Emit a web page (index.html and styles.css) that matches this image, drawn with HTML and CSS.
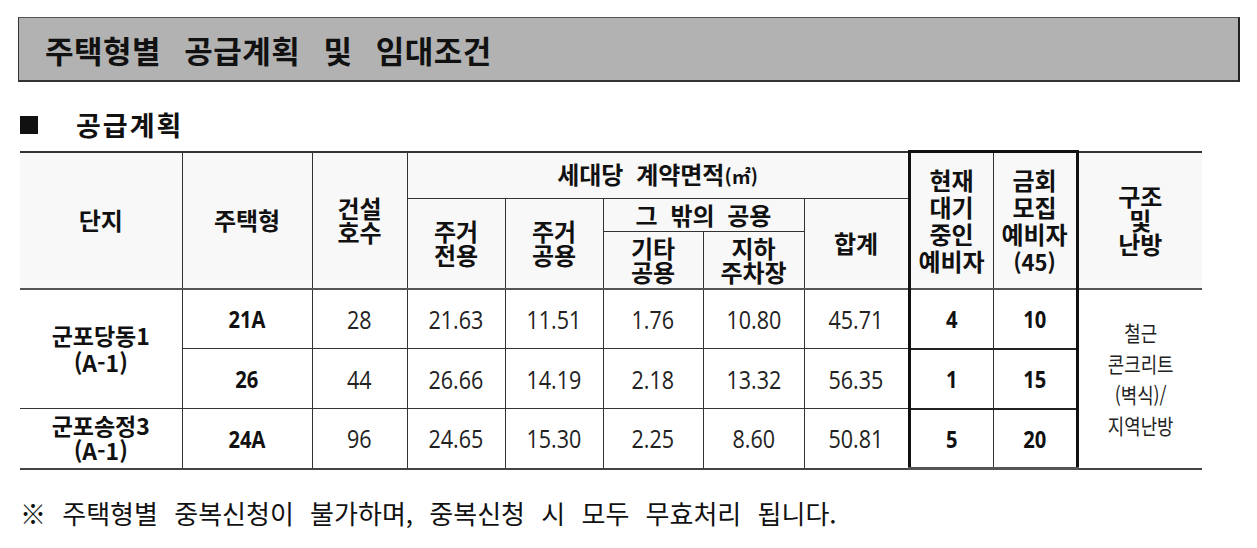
FILE: index.html
```html
<!DOCTYPE html>
<html lang="ko">
<head>
<meta charset="utf-8">
<title>주택형별 공급계획 및 임대조건</title>
<link rel="stylesheet" href="styles.css">
</head>
<body>
<div class="page">
  <div class="title-bar"><h1 class="title">주택형별 공급계획 및 임대조건</h1></div>

  <div class="section-head">
    <span class="square"></span>
    <h2 class="section-title">공급계획</h2>
  </div>

  <table class="plan">
    <colgroup>
      <col class="c-danji"><col class="c-type"><col class="c-count">
      <col class="c-a"><col class="c-b"><col class="c-c"><col class="c-d"><col class="c-sum">
      <col class="c-wait"><col class="c-recruit"><col class="c-struct">
    </colgroup>
    <thead>
      <tr class="h1">
        <th rowspan="3" class="first">단지</th>
        <th rowspan="3">주택형</th>
        <th rowspan="3">건설<br>호수</th>
        <th colspan="5">세대당 계약면적<span class="unit">(㎡)</span></th>
        <th rowspan="3" class="bx-l bx-t tall">현재<br>대기<br>중인<br>예비자</th>
        <th rowspan="3" class="bx-r bx-t tall">금회<br>모집<br>예비자<br><span class="num45">(45)</span></th>
        <th rowspan="3" class="last">구조<br>및<br>난방</th>
      </tr>
      <tr class="h2">
        <th rowspan="2">주거<br>전용</th>
        <th rowspan="2">주거<br>공용</th>
        <th colspan="2" class="other">그 밖의 공용</th>
        <th rowspan="2">합계</th>
      </tr>
      <tr class="h3">
        <th>기타<br>공용</th>
        <th>지하<br>주차장</th>
      </tr>
    </thead>
    <tbody>
      <tr>
        <td rowspan="2" class="first name">군포당동1<br>(A-1)</td>
        <td class="b"><span class="v">21A</span></td>
        <td><span class="v">28</span></td>
        <td><span class="v">21.63</span></td>
        <td><span class="v">11.51</span></td>
        <td><span class="v">1.76</span></td>
        <td><span class="v">10.80</span></td>
        <td><span class="v">45.71</span></td>
        <td class="b bx-l"><span class="v">4</span></td>
        <td class="b bx-r"><span class="v">10</span></td>
        <td rowspan="3" class="last struct"><span class="struct-text">철근<br>콘크리트<br>(벽식)/<br>지역난방</span></td>
      </tr>
      <tr>
        <td class="b"><span class="v">26</span></td>
        <td><span class="v">44</span></td>
        <td><span class="v">26.66</span></td>
        <td><span class="v">14.19</span></td>
        <td><span class="v">2.18</span></td>
        <td><span class="v">13.32</span></td>
        <td><span class="v">56.35</span></td>
        <td class="b bx-l"><span class="v">1</span></td>
        <td class="b bx-r"><span class="v">15</span></td>
      </tr>
      <tr>
        <td class="first name tight">군포송정3<br>(A-1)</td>
        <td class="b"><span class="v">24A</span></td>
        <td><span class="v">96</span></td>
        <td><span class="v">24.65</span></td>
        <td><span class="v">15.30</span></td>
        <td><span class="v">2.25</span></td>
        <td><span class="v">8.60</span></td>
        <td><span class="v">50.81</span></td>
        <td class="b bx-l bx-b"><span class="v">5</span></td>
        <td class="b bx-r bx-b"><span class="v">20</span></td>
      </tr>
    </tbody>
  </table>

  <p class="note">※ 주택형별 중복신청이 불가하며, 중복신청 시 모두 무효처리 됩니다.</p>
</div>
</body>
</html>
```

FILE: styles.css
```css
html, body {
  margin: 0;
  padding: 0;
  background: #ffffff;
}

.page {
  padding: 17px 17px 0 18px;
  font-family: "Noto Sans CJK KR", sans-serif;
  color: #111;
}

.title-bar {
  height: 62px;
  background: #b2b2b2;
  border-top: 1px solid #555;
  border-left: 1px solid #333;
  border-right: 2px solid #222;
  border-bottom: 2px solid #333;
  display: flex;
  align-items: center;
  padding-left: 26px;
}

.title {
  margin: 0;
  font-size: 31px;
  font-weight: 700;
  word-spacing: 14px;
  letter-spacing: 0.5px;
  line-height: 1;
  color: #111;
}

.section-head {
  display: flex;
  align-items: center;
  height: 26px;
  margin-top: 30px;
  padding-left: 2px;
}

.square {
  width: 18px;
  height: 18px;
  background: #111;
}

.section-title {
  margin: 0 0 0 38px;
  font-size: 27px;
  font-weight: 700;
  line-height: 26px;
  letter-spacing: 2px;
}

.plan {
  margin: 12px 0 0 2px;
  width: 1182px;
  border-collapse: collapse;
  table-layout: fixed;
  border-top: 2px solid #333;
  border-bottom: 2px solid #444;
}

.c-danji { width: 162px; }
.c-type { width: 130px; }
.c-count { width: 95px; }
.c-a { width: 98px; }
.c-b { width: 98px; }
.c-c { width: 100px; }
.c-d { width: 101px; }
.c-sum { width: 105px; }
.c-wait { width: 84px; }
.c-recruit { width: 84px; }
.c-struct { width: 125px; }

.plan th,
.plan td {
  border: 1px solid #333;
  padding: 0;
  text-align: center;
  vertical-align: middle;
}

.plan th {
  background: #f8f8f8;
  font-size: 24px;
  font-weight: 700;
  line-height: 24px;
  letter-spacing: 0;
  word-spacing: 6px;
  color: #111;
}

.plan thead tr.h3 th,
.plan thead th[rowspan="3"],
.plan thead tr.h2 th[rowspan="2"] {
  border-bottom: 2px solid #555;
}

.plan tr.h1 { height: 47px; }
.plan tr.h2 { height: 33px; }
.plan tr.h3 { height: 57px; }

.plan th.tall {
  line-height: 27px;
}

.plan th.other {
  line-height: 30px;
}

.unit {
  font-size: 19px;
  letter-spacing: 0;
}

.num45 {
  font-size: 22px;
  letter-spacing: 0;
}

.plan tbody tr { height: 60px; }

.plan td {
  font-family: "Open Sans", "Noto Sans CJK KR", sans-serif;
  font-size: 25px;
  color: #222;
}

.v {
  display: inline-block;
  transform: scaleX(0.86);
}

.plan td.b {
  font-weight: 700;
  font-size: 24px;
  color: #111;
}

.plan td.b .v {
  transform: scaleX(0.84);
}

.plan td.name {
  font-family: "Noto Sans CJK KR", sans-serif;
  font-weight: 700;
  font-size: 23px;
  line-height: 27px;
  color: #111;
}

.plan td.name.tight {
  line-height: 25px;
}

.plan .first { border-left: none; }
.plan .last { border-right: none; }

.plan .bx-l { border-left: 3px solid #111; }
.plan .bx-r { border-right: 3px solid #111; }
.plan .bx-t { border-top: 3px solid #111; }
.plan .bx-b { border-bottom: 3px solid #555; }

.plan tbody td.bx-l,
.plan tbody td.bx-r {
  border-top: 2px solid #222;
}

.plan td.struct {
  font-family: "Noto Sans CJK KR", sans-serif;
}

.struct-text {
  display: inline-block;
  font-size: 21px;
  line-height: 31px;
  font-weight: 400;
  color: #222;
  transform: scaleX(0.85);
}

.note {
  margin: 28px 0 0 2px;
  font-size: 26px;
  line-height: 30px;
  word-spacing: 9px;
  color: #111;
}
```
